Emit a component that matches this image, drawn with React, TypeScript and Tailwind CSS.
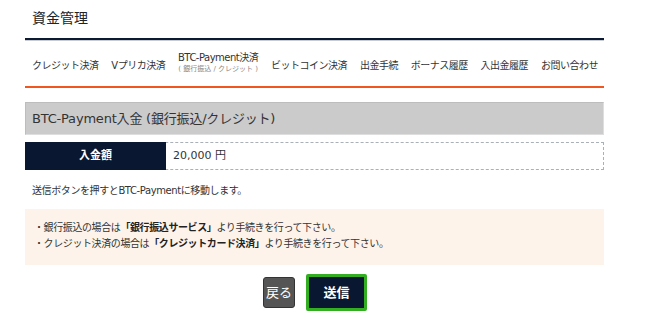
const font = { fontFamily: '"DejaVu Sans", "Noto Sans CJK JP", sans-serif' }

const navItems = ['クレジット決済', 'Vプリカ決済', 'BTC-Payment決済', 'ビットコイン決済', '出金手続', 'ボーナス履歴', '入出金履歴', 'お問い合わせ']

export default function App() {
  return (
    <div className="w-[660px] h-[322px] bg-white text-[#333]" style={font}>
      <div className="ml-[25px] w-[579px]">
        {/* Title */}
        <div className="h-[38px] pl-[7px] pt-[8px] text-[14px] leading-[20px] text-[#222]">資金管理</div>
        <div className="h-[2px] bg-[#0c1a33]" />
        <div className="h-px bg-[#c9cdd3]" />

        {/* Tabs */}
        <div className="h-[45px] flex items-center justify-between pl-[7px] pr-[6px] pt-[4px] text-[10px] tracking-[-0.5px] text-[#333]">
          {navItems.map((item) =>
            item === 'BTC-Payment決済' ? (
              <div key={item} className="flex flex-col items-center -mt-[6px]">
                <span className="leading-[14px]">{item}</span>
                <span className="text-[7px] leading-[9px] tracking-[0px] text-[#888]">( 銀行振込 / クレジット )</span>
              </div>
            ) : (
              <span key={item}>{item}</span>
            )
          )}
        </div>
        <div className="h-[2px] bg-[#f0561f]" />

        {/* Heading box */}
        <div className="mt-[14px] h-[33px] bg-[#cbcbcb] border border-[#dedede] border-t-[#bdbdbd] border-l-[#bdbdbd] flex items-center pl-[6px] text-[13px] tracking-[-0.2px] text-[#333]">
          BTC-Payment入金 (銀行振込/クレジット)
        </div>

        {/* Amount row */}
        <div className="mt-[7px] h-[28px] flex border border-[#a9b0b8] border-dashed">
          <div className="w-[141px] -ml-px -my-px bg-[#0a1730] text-white text-[11px] font-bold flex items-center justify-center">入金額</div>
          <div className="flex items-center pl-[7px] text-[11px] text-[#333]">20,000 円</div>
        </div>

        <p className="mt-[13px] pl-[7px] text-[10px] tracking-[-0.4px] text-[#333]">送信ボタンを押すとBTC-Paymentに移動します。</p>

        {/* Notice */}
        <div className="mt-[11px] h-[56px] bg-[#fdf3ea] pl-[9px] pt-[11px] text-[10px] leading-[16px] tracking-[-0.4px] text-[#333]">
          <p>・銀行振込の場合は<b className="text-[#222]">「銀行振込サービス」</b>より手続きを行って下さい。</p>
          <p>・クレジット決済の場合は<b className="text-[#222]">「クレジットカード決済」</b>より手続きを行って下さい。</p>
        </div>

        {/* Buttons */}
        <div className="mt-[9px] flex justify-center items-center gap-[11px] pl-[1px]">
          <button className="w-[32px] h-[31px] rounded-[3px] bg-[#555] border border-[#333] text-white text-[13px] leading-none">戻る</button>
          <button className="w-[61px] h-[37px] border-[3px] border-[#33ad22] rounded-[2px] bg-[#0a1730] text-white text-[13px] font-bold leading-none">送信</button>
        </div>
      </div>
    </div>
  )
}
